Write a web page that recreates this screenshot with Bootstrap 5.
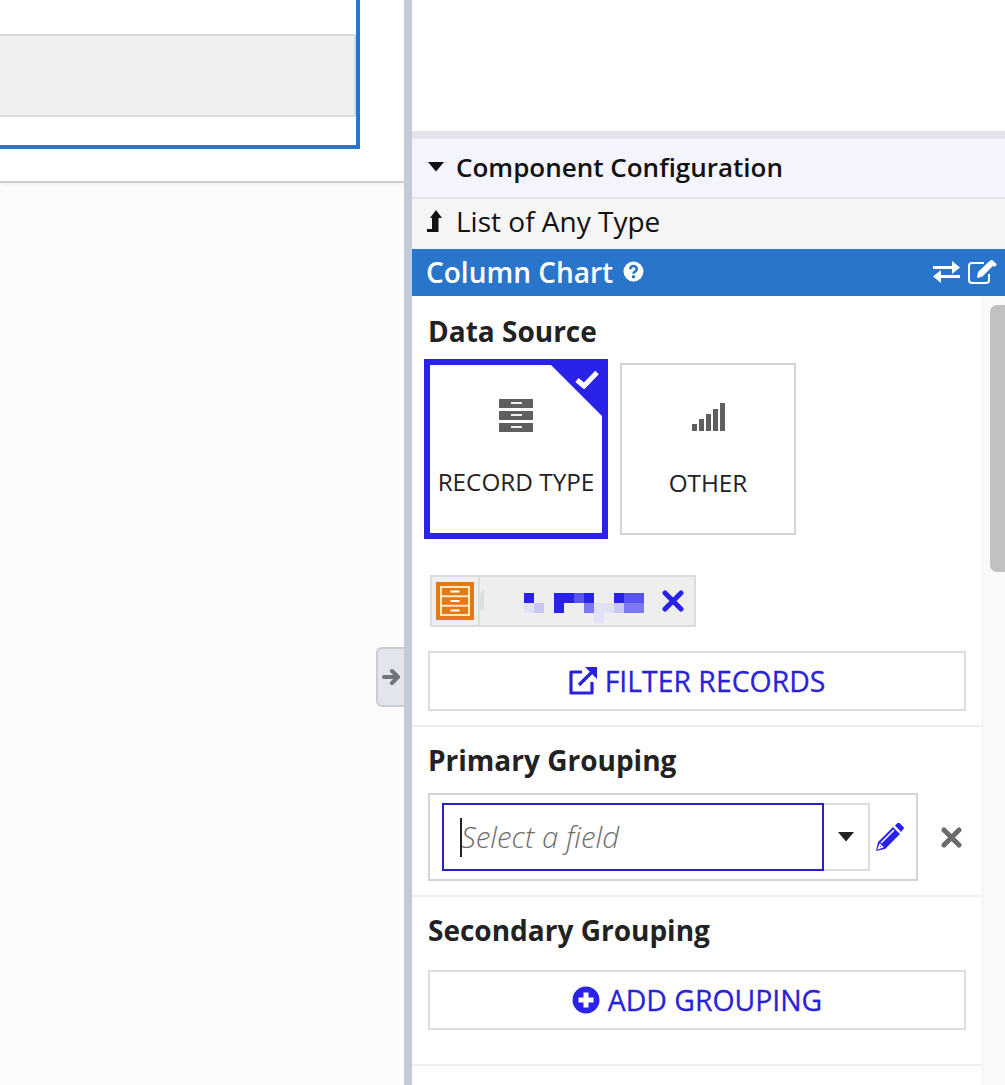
<!DOCTYPE html>
<html lang="en">
<head>
<meta charset="utf-8">
<title>Component Configuration</title>
<link rel="stylesheet" href="https://cdn.jsdelivr.net/npm/bootstrap@5.3.0/dist/css/bootstrap.min.css">
<style>
html,body{height:100%;margin:0;overflow:hidden}
body{font-family:"Open Sans","Liberation Sans",sans-serif;background:#fff;color:#1f1f1f}
.app-shell{width:1005px;height:1085px;position:relative}
.left-pane{width:404px;background:#fcfcfc}
.left-top{height:183px;background:#fff;border-bottom:2px solid #ccc;padding-right:44px;box-shadow:0 2px 6px rgba(0,0,0,.05)}
.blue-frame{height:149px;border:solid #2a75cc;border-width:0 4px 4px 0;padding-top:34px}
.gray-bar{height:83px;background:#f0f0f0;border:solid #d9d9d9;border-width:2px 2px 2px 0}
.pane-split{width:8px;background:#c4cad6}
.right-pane{width:593px}
.right-blank{height:131px}
.band{height:8px;background:#e3e4ea}
.cfg-head{height:60px;background:#f3f4fd;border-bottom:2px solid #e3e4ea;padding:0 0 2px 16px;font-size:26px;font-weight:600;color:#111;gap:12px}
.type-row{height:50px;background:#f5f5f5;padding:0 0 6px 15px;font-size:28px;color:#111;gap:13px}
.chart-bar{height:47px;background:#2a75cc;color:#fff;padding:0 8px 2px 14px;font-size:28px;font-weight:600;gap:10px}
.scroll-wrap{height:789px}
.scroll-main{width:570px}
.scroll-track{width:23px;background:#fafafa;border-left:1px solid #eee;padding:9px 0 0 7px}
.scroll-thumb{height:267px;background:#c1c1c1;border-radius:7px 0 0 7px}
.group{padding:0 16px;border-bottom:2px solid #eee}
.grp-title{font-size:28px;font-weight:700;color:#222;line-height:34px;margin:0;white-space:nowrap}
.tile{background:#fff;position:relative;text-align:center;font-size:24.3px;color:#222}
.tile-on{width:184px;height:180px;border:6px solid #2a22e8;padding-top:30px}
.tile-off{width:176px;height:172px;border:2px solid #d4d4d4;padding-top:31px;margin:4px 0 0 12px}
.tile-lab{margin-top:34px;line-height:32px}
.tile-off .tile-lab{margin-top:35px}
.corner{position:absolute;top:-1px;right:-1px;width:53px;height:53px;background:#2a22e8;clip-path:polygon(0 0,100% 0,100% 100%)}
.tick{position:absolute;top:5px;right:3px}
.chip{width:266px;height:52px;background:#eee;border:2px solid #ddd;margin:36px 0 0 6px}
.chip-ico{width:48px;border-right:2px solid #ddd;padding-left:4px}
.orange{width:38px;height:38px;background:#e67a12}
.chip-notch{width:4px;height:20px;background:#ddd;border-radius:4px 0 0 4px}
.blur-text{display:grid;grid-template-columns:repeat(12,10px);grid-auto-rows:10px;margin:14px 0 0 40px;width:120px}
.px1{background:#2a22e8}.px2{background:#5a52ee}.px3{background:#7d77f1}.px4{background:#c9c7f6}.px5{background:#e2e1f6}
.chip-x{margin-left:auto;margin-right:10px;flex:none}
.btn.act-btn{display:flex;align-items:center;justify-content:center;gap:8px;height:60px;width:538px;border:2px solid #ddd;border-radius:0;background:#fff;color:#2a22d8;font-size:28.4px;font-weight:500;padding:0;-webkit-text-stroke:.3px #2a22d8}
.field-box{width:490px;height:88px;border:2px solid #d4d4d4;padding:8px 0 0 12px;flex:none}
.field-in{width:382px;height:68px;border:2px solid #2a22c0;padding-left:17px;font-size:29.5px;font-weight:300;font-style:italic;color:#6f6f6f;position:relative}
.caret-line{position:absolute;left:16px;top:13px;width:2px;height:39px;background:#222}
.field-drop{width:46px;height:68px;border:solid #ddd;border-width:2px 2px 2px 0}
.pencil{margin:20px 0 0 6px}
.del-x{margin-left:23px;flex:none}
.handle-tab{left:376px;top:647px;width:28px;height:60px;background:#e3e5ec;border:2px solid #c9ccd4;border-right:0;border-radius:6px 0 0 6px}
</style>
</head>
<body>
<div class="app-shell d-flex">
  <div class="left-pane">
    <div class="left-top"><div class="blue-frame"><div class="gray-bar"></div></div></div>
  </div>
  <div class="pane-split"></div>
  <div class="right-pane">
    <div class="right-blank"></div>
    <div class="band"></div>
    <div class="cfg-head d-flex align-items-center">
      <svg width="16" height="10" viewBox="0 0 16 10"><path fill="#111" d="M0 0h16L8 9.500z"/></svg>
      <span>Component Configuration</span>
    </div>
    <div class="type-row d-flex align-items-center">
      <svg width="16" height="22" viewBox="0 0 16 22"><path fill="#111" d="M9 0l6 8h-3.500v14H0v-3h5V8H3z"/></svg>
      <span>List of Any Type</span>
    </div>
    <div class="chart-bar d-flex align-items-center">
      <span>Column Chart</span>
      <svg width="21" height="21" viewBox="0 0 21 21"><circle cx="10.500" cy="10.500" r="10" fill="#fff"/><path fill="none" stroke="#2a75cc" stroke-width="2.600" d="M7.300 8.200c0-4.300 6.500-4.300 6.500-.3 0 2.600-3.300 2.500-3.300 4.800"/><circle cx="10.500" cy="15.700" r="1.700" fill="#2a75cc"/></svg>
      <div class="ms-auto d-flex align-items-center gap-2">
        <svg width="27" height="22" viewBox="0 0 27 22"><path fill="#fff" d="M0 5h19V0l8 6.500-8 6.500V8H0zM27 14H8V9l-8 6.500L8 22v-5h19z"/></svg>
        <svg width="29" height="24" viewBox="0 0 29 24"><path fill="none" stroke="#fff" stroke-width="2" d="M21 14v6a3 3 0 0 1-3 3H4a3 3 0 0 1-3-3V6a3 3 0 0 1 3-3h12"/><path fill="#fff" d="M10 12L21 1.500l.5-.2 4 4L14.500 16.500 9 18zM23 0l1-.2 4.500 4.200v1l-2 2-5.500-5z"/></svg>
      </div>
    </div>
    <div class="scroll-wrap d-flex">
      <div class="scroll-main">
        <div class="group" style="height:431px;padding-left:12px">
          <div class="grp-title" style="padding:18px 0 0 4px;height:63px">Data Source</div>
          <div class="d-flex align-items-start">
            <div class="tile tile-on">
              <span class="corner"></span>
              <svg class="tick" width="24" height="19" viewBox="0 0 24 19"><path fill="none" stroke="#fff" stroke-width="5" d="M2 10l7 6L22 2.500"/></svg>
              <svg width="34" height="33" viewBox="0 0 34 33"><path fill="#5f5f5f" d="M0 0h34v9H0zM0 12h34v9H0zM0 24h34v9H0z"/><path fill="#eee" d="M12 3h11v2H12zM12 15h11v2H12zM12 27h11v2H12z"/></svg>
              <div class="tile-lab">RECORD TYPE</div>
            </div>
            <div class="tile tile-off">
              <svg width="33" height="28" viewBox="0 0 33 28"><path fill="#5f5f5f" d="M0 21h5v7H0zM7 16h5v12H7zM14 11h5v17h-5zM21 6h5v22h-5zM28 0h5v28h-5z"/></svg>
              <div class="tile-lab">OTHER</div>
            </div>
          </div>
          <div class="chip d-flex align-items-center">
            <div class="chip-ico d-flex align-items-center h-100 flex-shrink-0">
              <div class="orange d-flex align-items-center justify-content-center">
                <svg width="30" height="30" viewBox="0 0 30 30"><path fill="none" stroke="#fde9c8" stroke-width="2" d="M1 1h28v28H1zM1 10.300h28M1 19.700h28"/><path fill="#fff" d="M10.500 4.500h9v2h-9zM10.500 14h9v2h-9zM10.500 23.500h9v2h-9z"/></svg>
              </div>
            </div>
            <span class="chip-notch flex-shrink-0"></span>
            <div class="blur-text" aria-hidden="true">
              <i class="px1"></i><i></i><i></i><i class="px1"></i><i class="px1"></i><i class="px2"></i><i class="px1"></i><i></i><i></i><i class="px1"></i><i class="px2"></i><i class="px2"></i>
              <i class="px5"></i><i class="px4"></i><i></i><i class="px1"></i><i></i><i></i><i class="px3"></i><i class="px5"></i><i class="px5"></i><i class="px4"></i><i class="px3"></i><i class="px3"></i>
              <i></i><i></i><i></i><i></i><i></i><i></i><i></i><i class="px5"></i>
            </div>
            <svg class="chip-x" width="22" height="22" viewBox="0 0 22 22"><path fill="none" stroke="#2a22e8" stroke-width="5" stroke-linecap="round" d="M3 3l16 16M19 3L3 19"/></svg>
          </div>
          <div style="height:24px"></div>
          <button type="button" class="btn act-btn ms-1">
            <svg width="28" height="28" viewBox="0 0 28 28"><path fill="none" stroke="#2a22d8" stroke-width="3.200" stroke-linejoin="round" d="M13 5H2v21h21V15M10 18L24 4"/><path fill="#2a22d8" d="M16 0h12v12l-4-4-4-4z"/></svg>
            <span>FILTER RECORDS</span>
          </button>
        </div>
        <div class="group" style="height:170px">
          <div class="grp-title" style="padding-top:16px;height:66px">Primary Grouping</div>
          <div class="d-flex align-items-center">
            <div class="field-box d-flex align-items-start">
              <div class="field-in d-flex align-items-center"><span class="caret-line"></span>Select a field</div>
              <div class="field-drop d-flex align-items-center justify-content-center">
                <svg width="16" height="10" viewBox="0 0 16 10"><path fill="#222" d="M0 0h16L8 9.500z"/></svg>
              </div>
              <svg class="pencil" width="28" height="28" viewBox="0 0 28 28"><path fill="#2a22e8" d="M0 28l2-9L17 4l7 7L9 26zM19 2.500L21.500 0q1-.5 2 0l4 4q.8 1 0 2L25 9z"/><path fill="none" stroke="#fff" stroke-width="1.500" d="M5 20L18 7M2.500 25.500l1.500-4 2.500 2.500z"/></svg>
            </div>
            <svg class="del-x" width="21" height="21" viewBox="0 0 21 21"><path fill="none" stroke="#6b6b6b" stroke-width="5" stroke-linecap="round" d="M3 3l15 15M18 3L3 18"/></svg>
          </div>
        </div>
        <div class="group" style="height:169px">
          <div class="grp-title" style="padding-top:16px;height:73px">Secondary Grouping</div>
          <button type="button" class="btn act-btn">
            <svg width="28" height="28" viewBox="0 0 28 28"><circle cx="14" cy="14" r="13.500" fill="#2a22e8"/><path fill="#fff" d="M11.500 6.500h5v5h5v5h-5v5h-5v-5h-5v-5h5z"/></svg>
            <span>ADD GROUPING</span>
          </button>
        </div>
      </div>
      <div class="scroll-track"><div class="scroll-thumb"></div></div>
    </div>
  </div>
  <div class="position-absolute handle-tab d-flex align-items-center justify-content-center">
    <svg width="18" height="18" viewBox="0 0 18 18"><path fill="none" stroke="#70737b" stroke-width="4" stroke-linecap="round" stroke-linejoin="round" d="M2 9h13M10 3l6 6-6 6"/></svg>
  </div>
</div>
<script src="https://cdn.jsdelivr.net/npm/bootstrap@5.3.0/dist/js/bootstrap.bundle.min.js"></script>
</body>
</html>
